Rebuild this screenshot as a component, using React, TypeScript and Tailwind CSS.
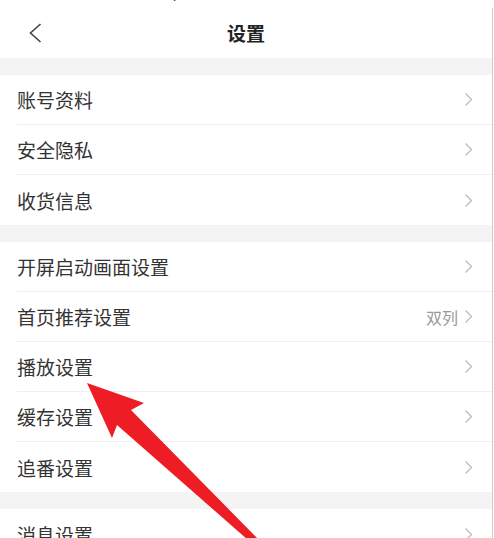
type Row = { label: string; value?: string };

const groups: Row[][] = [
  [{ label: "账号资料" }, { label: "安全隐私" }, { label: "收货信息" }],
  [
    { label: "开屏启动画面设置" },
    { label: "首页推荐设置", value: "双列" },
    { label: "播放设置" },
    { label: "缓存设置" },
    { label: "追番设置" },
  ],
  [{ label: "消息设置" }],
];

const font = { fontFamily: '"Noto Sans CJK SC", "Noto Sans", sans-serif' };

function Chevron() {
  return (
    <svg width="9" height="15" viewBox="0 0 9 15" className="text-[#bdbdbd]">
      <polyline points="1.5,1.5 7.5,7.5 1.5,13.5" fill="none" stroke="currentColor" strokeWidth="1.4" />
    </svg>
  );
}

function SettingRow({ row, last }: { row: Row; last: boolean }) {
  return (
    <div className="pl-[17px]">
      <div
        className={`flex h-[50px] items-center justify-between pr-[19px] ${
          last ? "" : "border-b border-[#f0f0f0]"
        }`}
      >
        <span className="text-[19px] leading-none text-[#333]">{row.label}</span>
        <div className="flex items-center gap-[6px]">
          {row.value ? (
            <span className="text-[16px] leading-none text-[#999]">{row.value}</span>
          ) : null}
          <Chevron />
        </div>
      </div>
    </div>
  );
}

export default function App() {
  return (
    <div className="relative h-[538px] w-[494px] overflow-hidden bg-white" style={font}>
      {/* clipped caption line from the page above */}
      <div className="h-[8px] overflow-hidden">
        <div className="-mt-[20px] pl-[12px] text-[20px] font-bold leading-[20px] text-black">
          4.进入设置界面后，点击播放设置选项。
        </div>
      </div>
      <div className="flex">
        <div className="w-[492px]">
          <header className="relative flex h-[50px] items-center justify-center">
            <svg
              width="13"
              height="20"
              viewBox="0 0 13 20"
              className="absolute left-[29px] top-[15px] text-[#444]"
            >
              <polyline points="11.5,1 1.5,10 11.5,19" fill="none" stroke="currentColor" strokeWidth="1.6" />
            </svg>
            <h1 className="text-[19px] font-semibold text-[#222]">设置</h1>
          </header>
          {groups.map((group, gi) => (
            <section key={gi}>
              <div className="h-[17px] bg-[#f4f4f4]" />
              {group.map((row, ri) => (
                <SettingRow key={row.label} row={row} last={ri === group.length - 1} />
              ))}
            </section>
          ))}
        </div>
        <div className="w-px self-stretch bg-[#cfcfcf]" />
      </div>
      <svg
        className="pointer-events-none absolute inset-0"
        width="494"
        height="538"
        viewBox="0 0 494 538"
      >
        <polygon
          points="87,383 144,403 131,410 259,540 248,540 117,425 112,438"
          fill="#ee1c24"
        />
      </svg>
    </div>
  );
}
